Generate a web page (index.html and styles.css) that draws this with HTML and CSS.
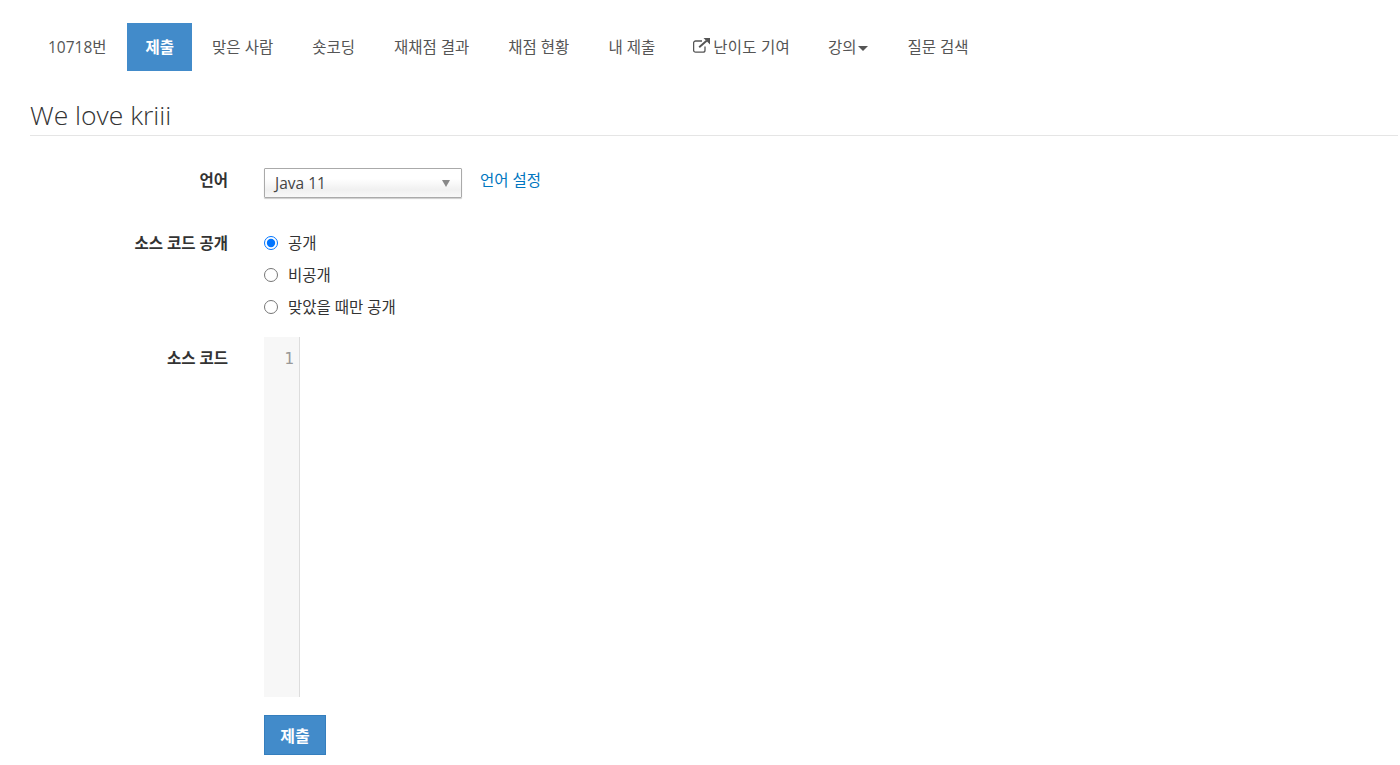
FILE: index.html
```html
<!DOCTYPE html>
<html lang="ko">
<head>
<meta charset="utf-8">
<title>We love kriii</title>
<link rel="stylesheet" href="styles.css">
</head>
<body>
<div class="page">
  <ul class="nav">
    <li><a class="tab tab-first" href="#">10718번</a></li>
    <li><a class="tab active" href="#">제출</a></li>
    <li><a class="tab" href="#">맞은 사람</a></li>
    <li><a class="tab" href="#">숏코딩</a></li>
    <li><a class="tab" href="#">재채점 결과</a></li>
    <li><a class="tab" href="#">채점 현황</a></li>
    <li><a class="tab" href="#">내 제출</a></li>
    <li><a class="tab tab-icon" href="#"><svg class="ext" viewBox="0 0 17 15" width="17" height="15"><path d="M12 8.5v3.7a2 2 0 0 1-2 2H2.6a2 2 0 0 1-2-2V5a2 2 0 0 1 2-2H9" fill="none" stroke="currentColor" stroke-width="1.3"/><path d="M6.2 9.3 13.6 2.8" fill="none" stroke="currentColor" stroke-width="1.9"/><path d="M10.5 0H17v6.5z" fill="currentColor"/></svg>난이도 기여</a></li>
    <li><a class="tab" href="#">강의<span class="caret"></span></a></li>
    <li><a class="tab" href="#">질문 검색</a></li>
  </ul>
  <h1 class="title">We love kriii</h1>
  <form class="form">
    <div class="row row-lang">
      <label class="label">언어</label>
      <div class="control lang">
        <div class="select"><span>Java 11</span><i class="arrow"></i></div>
        <a class="link" href="#">언어 설정</a>
      </div>
    </div>
    <div class="row row-vis">
      <label class="label">소스 코드 공개</label>
      <div class="control radios">
        <label class="radio"><input type="radio" name="vis" checked>공개</label>
        <label class="radio"><input type="radio" name="vis">비공개</label>
        <label class="radio"><input type="radio" name="vis">맞았을 때만 공개</label>
      </div>
    </div>
    <div class="row row-code">
      <label class="label">소스 코드</label>
      <div class="control editor"><div class="gutter">1</div></div>
    </div>
    <div class="row row-submit">
      <span></span>
      <div class="control"><button class="btn" type="button">제출</button></div>
    </div>
  </form>
</div>
</body>
</html>
```
FILE: styles.css
```css
* { box-sizing: border-box; }
html, body { margin: 0; padding: 0; background: #fff; }
body {
  font-family: "Open Sans", "Noto Sans CJK KR", sans-serif;
  font-size: 15.5px;
  line-height: 20px;
  color: #333;
  height: 765px;
  overflow: hidden;
}
.page { padding: 23px 2px 0 30px; }
.nav { list-style: none; margin: 0; padding: 0; display: flex; gap: 2px; height: 48px; }
.tab {
  display: flex;
  align-items: center;
  height: 48px;
  padding: 0 19px 0 18px;
  color: #555;
  text-decoration: none;
  white-space: nowrap;
}
.tab-first { padding-right: 18px; }
.tab-icon { letter-spacing: 0.25px; padding-right: 18px; }
.tab.active { color: #fff; background: #428bca; font-weight: 600; padding: 0 18px 0 19px; }
.ext { margin: -3px 3px 0 -1px; }
.caret {
  display: inline-block;
  margin: 2px 1px 0;
  border-top: 5px solid #555;
  border-left: 5px solid transparent;
  border-right: 5px solid transparent;
}
.title {
  margin: 27px 0 0;
  height: 38px;
  font-size: 26.5px;
  line-height: 34px;
  font-weight: 300;
  color: #333;
  border-bottom: 1px solid #e5e5e5;
}
.form { margin-top: 32px; }
.row { display: grid; grid-template-columns: 198px 1fr; column-gap: 36px; }
.label { text-align: right; font-weight: 700; color: #333; padding-top: 2px; }
.row-lang { height: 30px; margin-bottom: 35px; }
.lang { display: flex; align-items: flex-start; gap: 18px; }
.select {
  width: 198px;
  height: 30px;
  border: 1px solid #aaa;
  border-radius: 1px;
  padding: 4px 10px;
  display: flex;
  justify-content: space-between;
  align-items: center;
  background: linear-gradient(#fff 35%, #f0f0f0 75%, #f8f8f8 100%);
  box-shadow: 0 1px 1px #ccc;
  color: #444;
}
.arrow {
  border-top: 7px solid #888;
  border-left: 4.5px solid transparent;
  border-right: 4.5px solid transparent;
  margin-right: 1px;
}
.link { color: #0076c0; text-decoration: none; padding-top: 2px; }
.radios { display: flex; flex-direction: column; gap: 12px; }
.row-vis .label { padding-top: 0; }
.radio { display: flex; align-items: center; height: 20px; }
.radio input { width: 14px; height: 14px; margin: 0 10px 0 0; accent-color: #0075ff; }
.row-code { margin-top: 20px; }
.row-code .label { padding-top: 11px; }
.editor { height: 360px; }
.gutter {
  width: 36px;
  height: 360px;
  background: #f7f7f7;
  border-right: 1px solid #ddd;
  font-family: "DejaVu Sans Mono", monospace;
  font-size: 16px;
  line-height: 20px;
  color: #999;
  text-align: right;
  padding: 12px 5px 0 0;
}
.row-submit { margin-top: 18px; }
.btn {
  display: block;
  width: 62px;
  height: 40px;
  padding: 0;
  font: 600 16px "Open Sans", "Noto Sans CJK KR", sans-serif;
  color: #fff;
  background: #428bca;
  border: 1px solid #357ebd;
}
```
